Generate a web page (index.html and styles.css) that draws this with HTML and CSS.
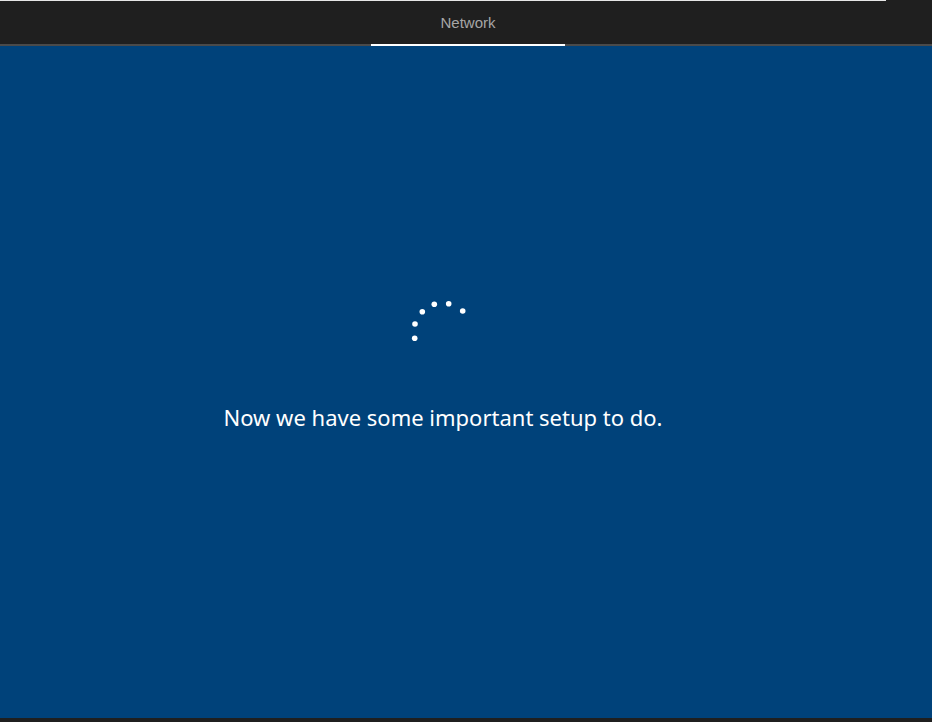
FILE: index.html
```html
<!DOCTYPE html>
<html lang="en">
<head>
    <meta charset="UTF-8">
    <meta name="viewport" content="width=device-width, initial-scale=1.0">
    <title>Network</title>
    <link rel="stylesheet" href="styles.css">
</head>
<body>
    <div class="topline"></div>
    <div class="header">
        <div class="tab active">Network</div>
    </div>
    <div class="main">
        <svg class="spinner" width="64" height="64" viewBox="0 0 64 64">
            <circle cx="3.7" cy="40.3" r="2.8" fill="#fff"/>
            <circle cx="4" cy="26" r="2.8" fill="#fff"/>
            <circle cx="11.3" cy="13.7" r="2.8" fill="#fff"/>
            <circle cx="23.3" cy="6.3" r="2.8" fill="#fff"/>
            <circle cx="37.7" cy="5.7" r="2.8" fill="#fff"/>
            <circle cx="51.7" cy="13" r="2.8" fill="#fff"/>
        </svg>
        <p class="status">Now we have some important setup to do.</p>
    </div>
    <div class="footer"></div>
</body>
</html>
```

FILE: styles.css
```css
html, body {
    margin: 0;
    padding: 0;
    height: 100%;
}
body {
    font-family: 'Noto Sans', 'Open Sans', sans-serif;
    background: #00427a;
    display: flex;
    flex-direction: column;
    overflow: hidden;
}
.topline {
    height: 1px;
    width: 886px;
    background: #e6e6e6;
    flex: none;
}
.topline + .header {
    margin-top: -1px;
}
.header {
    height: 44px;
    background: #1f1f1f;
    border-bottom: 2px solid #4a4a4a;
    display: flex;
    justify-content: center;
    flex: none;
    position: relative;
    z-index: -1;
}
.tab {
    width: 194px;
    margin-left: 4px;
    text-align: center;
    color: #a6a6a6;
    font-family: 'Liberation Sans', Arial, sans-serif;
    font-size: 15px;
    line-height: 45px;
    margin-bottom: -2px;
}
.tab.active {
    border-bottom: 2px solid #fff;
}
.main {
    flex: 1;
    display: flex;
    flex-direction: column;
    align-items: center;
    padding-top: 252px;
    padding-right: 46px;
}
.spinner {
    display: block;
}
.status {
    margin: 40px 0 0;
    color: #fff;
    font-size: 22px;
    line-height: 30px;
}
.footer {
    height: 4px;
    background: #1f1f1f;
    flex: none;
}
```
